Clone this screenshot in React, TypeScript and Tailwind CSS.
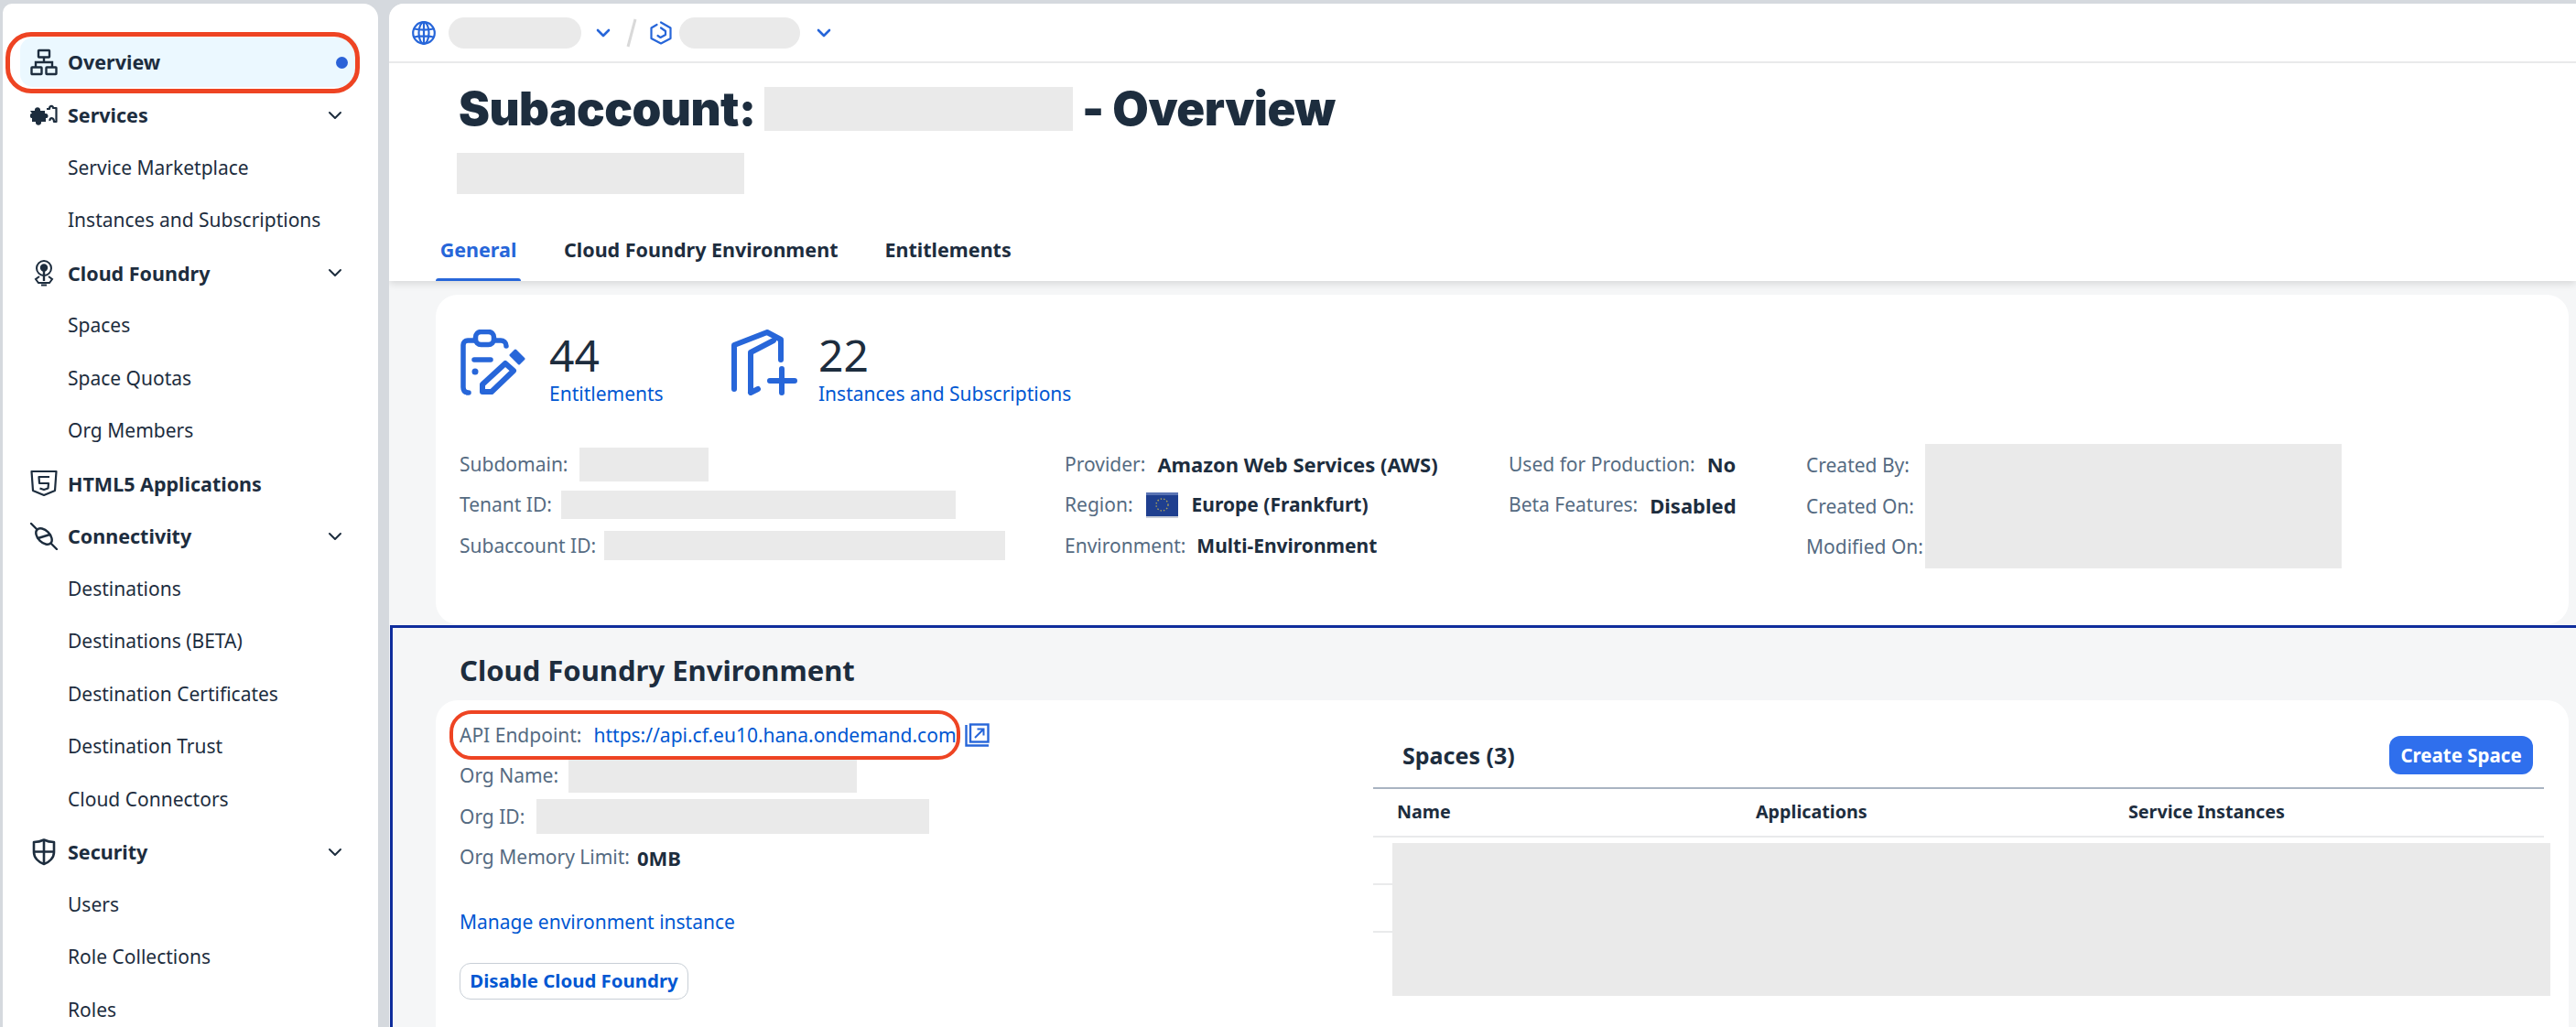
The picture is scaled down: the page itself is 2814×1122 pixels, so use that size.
import React from "react";

const F = "font-['Noto_Sans',sans-serif]";

function Chevron({ c = "text-[#1d2d3e]", w = 2 }: { c?: string; w?: number }) {
  return (
    <svg className={`w-[16px] h-[10px] ${c}`} viewBox="0 0 16 10" fill="none" stroke="currentColor" strokeWidth={w} strokeLinecap="round" strokeLinejoin="round">
      <path d="M2 2 L8 8 L14 2" />
    </svg>
  );
}

const OverviewIcon = () => (
  <svg className="w-[30px] h-[30px]" viewBox="0 0 30 30" fill="none" stroke="#1d2d3e" strokeWidth="2.4">
    <rect x="9" y="2" width="12" height="7.5" rx="0.6" />
    <path d="M15 9.5 V15 M6 20 V15 H24 V20" />
    <rect x="1.5" y="20.5" width="11" height="7.5" rx="0.6" />
    <rect x="17.5" y="20.5" width="11" height="7.5" rx="0.6" />
  </svg>
);
const ServicesIcon = () => (
  <svg className="w-[30px] h-[30px]" viewBox="0 0 30 30" fill="none">
    <path d="M0 10 H5 C4 5 12 5 11 10 H16 V13 C20 12 21 18 17 18 V22 H12 C13 27 5 27 6 22 H2 V18 C-1 18 -1 13 2 13 Z" fill="#1d2d3e" />
    <path d="M18 8 H21 C21 4 25 4 25 7 H28.5 V22 H26 C26 17 21 17 21.5 21" stroke="#1d2d3e" strokeWidth="2.2" strokeLinejoin="round" />
  </svg>
);
const CFIcon = () => (
  <svg className="w-[30px] h-[30px]" viewBox="0 0 30 30" fill="none" stroke="#1d2d3e" strokeWidth="2">
    <circle cx="15" cy="10" r="8" />
    <circle cx="15" cy="9.5" r="3.2" fill="#1d2d3e" />
    <path d="M15 12 V24" strokeWidth="2.4" />
    <path d="M10 19 L6 22 L9 26 H21 L24 22 L20 19 M12 28.5 H18" />
  </svg>
);
const Html5Icon = () => (
  <svg className="w-[30px] h-[30px]" viewBox="0 0 30 30" fill="none" stroke="#1d2d3e" strokeWidth="2.2" strokeLinejoin="round">
    <path d="M1.5 2 H28.5 L27 23 L15 28 L3 23 Z" />
    <path d="M21 8 H9.5 L10 15 H20 L19.5 20.5 L15 22 L10.5 20.5" />
  </svg>
);
const ConnIcon = () => (
  <svg className="w-[30px] h-[30px]" viewBox="0 0 30 30" fill="none" stroke="#1d2d3e" strokeWidth="2.4" strokeLinecap="round">
    <path d="M1 1 L7.5 7.5 M22.5 22.5 L29 29" />
    <ellipse cx="15" cy="15" rx="10.5" ry="6.5" transform="rotate(45 15 15)" />
    <path d="M8.5 17 L21.5 13" />
  </svg>
);
const SecIcon = () => (
  <svg className="w-[30px] h-[30px]" viewBox="0 0 30 30" fill="none" stroke="#1d2d3e" strokeWidth="2.6" strokeLinejoin="round">
    <path d="M15 1.5 C19 3.5 22 4 26 4 V15 C26 21 21 26 15 28 C9 26 4 21 4 15 V4 C8 4 11 3.5 15 1.5 Z" />
    <path d="M15 1.5 V28 M4 14.5 H26" />
  </svg>
);

function NavHead({ icon, label, chevron = true }: { icon: React.ReactNode; label: string; chevron?: boolean }) {
  return (
    <div className="h-[57.5px] flex items-center pl-[30px] pr-[39px]">
      <span className="w-[30px] flex justify-center">{icon}</span>
      <span className="ml-[11px] flex-1 font-bold text-[21.5px] text-[#1d2d3e]">{label}</span>
      {chevron && <Chevron />}
    </div>
  );
}
function NavItem({ label }: { label: string }) {
  return <div className="h-[57.5px] flex items-center pl-[71px] text-[#1d2d3e]">{label}</div>;
}

function Redact({ className }: { className: string }) {
  return <div className={`bg-[#eaeaea] shrink-0 ${className}`} />;
}

function Field({ label, value, valueClass = "ml-[13px] text-[22px]", children }: { label: string; value?: string; valueClass?: string; children?: React.ReactNode }) {
  return (
    <div className="h-[44.5px] flex items-center whitespace-nowrap">
      <span className="text-[#556b82]">{label}</span>
      {children}
      {value && <span className={`font-bold text-[#1d2d3e] ${valueClass}`}>{value}</span>}
    </div>
  );
}

const Flag = () => (
  <svg className="w-[35px] h-[28px] ml-[14px] shrink-0" viewBox="0 0 35 28">
    <rect width="35" height="26" fill="#1f3f8f" />
    <rect width="35" height="3" fill="#5a74b4" />
    <rect y="26" width="35" height="2" fill="#c9ced8" />
    <circle cx="17.5" cy="13.5" r="6.5" fill="none" stroke="#a9a05a" strokeWidth="1.4" strokeDasharray="1.5 2" />
  </svg>
);

export default function App() {
  return (
    <div className={`${F} w-[2814px] h-[1122px] overflow-hidden bg-[#d5d9de] flex pt-[4px] pl-[3px] text-[21px] leading-none`}>
      <aside className="w-[410px] h-full bg-white rounded-tr-[16px] rounded-tl-[10px] pt-[37px] shrink-0 relative">
        <div className="h-[54px] mb-[2px] ml-[19px] mr-[21px] bg-[#ebf8ff] rounded-[14px] flex items-center pl-[11px] pr-[12px]">
          <OverviewIcon />
          <span className="ml-[11px] flex-1 font-bold text-[21.5px] text-[#1d2d3e]">Overview</span>
          <span className="w-[13px] h-[13px] rounded-full bg-[#2a62d8]" />
        </div>
        <div className="absolute left-[3px] top-[31px] w-[387px] h-[67px] rounded-[28px] border-[5px] border-[#ee4423]" />
        <NavHead icon={<ServicesIcon />} label="Services" />
        <NavItem label="Service Marketplace" />
        <NavItem label="Instances and Subscriptions" />
        <NavHead icon={<CFIcon />} label="Cloud Foundry" />
        <NavItem label="Spaces" />
        <NavItem label="Space Quotas" />
        <NavItem label="Org Members" />
        <NavHead icon={<Html5Icon />} label="HTML5 Applications" chevron={false} />
        <NavHead icon={<ConnIcon />} label="Connectivity" />
        <NavItem label="Destinations" />
        <NavItem label="Destinations (BETA)" />
        <NavItem label="Destination Certificates" />
        <NavItem label="Destination Trust" />
        <NavItem label="Cloud Connectors" />
        <NavHead icon={<SecIcon />} label="Security" />
        <NavItem label="Users" />
        <NavItem label="Role Collections" />
        <NavItem label="Roles" />
      </aside>

      <main className="ml-[12px] flex-1 min-w-0 h-full flex flex-col rounded-tl-[16px] overflow-hidden bg-[#f5f6f7]">
        <div className="bg-white shadow-[0_3px_8px_rgba(0,0,0,0.12)] relative z-10 shrink-0">
          <div className="h-[65px] border-b-2 border-[#e9eaeb] flex items-center pl-[25px]">
            <svg className="w-[26px] h-[26px] text-[#2766d9]" viewBox="0 0 26 26" fill="none" stroke="currentColor" strokeWidth="2.2">
              <circle cx="13" cy="13" r="11.8" />
              <ellipse cx="13" cy="13" rx="5.5" ry="11.8" />
              <path d="M13 1 V25 M2.5 8.5 C8 10 18 10 23.5 8.5 M2.5 17.5 C8 16 18 16 23.5 17.5" />
            </svg>
            <Redact className="ml-[14px] w-[145px] h-[34px] rounded-full" />
            <span className="ml-[16px]"><Chevron c="text-[#2766d9]" w={2.6} /></span>
            <svg className="ml-[17px] w-[12px] h-[32px]" viewBox="0 0 12 32" stroke="#d9d9d9" strokeWidth="3"><path d="M10 1 L2 31" /></svg>
            <svg className="ml-[14px] w-[24px] h-[26px] text-[#2766d9]" viewBox="0 0 24 26" fill="none" stroke="currentColor" strokeWidth="2.2" strokeLinejoin="round" strokeLinecap="round">
              <path d="M12 1.5 L22.5 7.5 V19 L12 24.5 L1.5 19 V7.5 L7.5 4" />
              <path d="M12 7.5 L17 11 V15 L11.5 18 L8.5 16" />
            </svg>
            <Redact className="ml-[8px] w-[132px] h-[34px] rounded-full" />
            <span className="ml-[18px]"><Chevron c="text-[#2766d9]" w={2.6} /></span>
          </div>
          <div className="pl-[74px] pt-[25px] h-[173px]">
            <div className="flex items-center h-[49px] text-[51px] font-black font-['Inter',sans-serif] tracking-[-0.5px] text-[#1d2d3e] whitespace-nowrap">
              <span className="w-[326px] shrink-0 pl-[2px]">Subaccount:</span>
              <Redact className="ml-[10px] w-[337px] h-[48px]" />
              <span className="ml-[10px]">- Overview</span>
            </div>
            <Redact className="mt-[24px] w-[314px] h-[45px]" />
          </div>
          <div className="h-[65px] flex pl-[51px] font-bold text-[21.5px]">
            <div className="w-[93px] h-full relative flex items-center justify-center text-[#2766d9] pb-[3px]">
              General
              <span className="absolute left-0 right-0 bottom-0 h-[3px] rounded-t bg-[#2766d9]" />
            </div>
            <div className="ml-[47px] flex items-center pb-[3px] text-[#1d2d3e]">Cloud Foundry Environment</div>
            <div className="ml-[51px] flex items-center pb-[3px] text-[#1d2d3e]">Entitlements</div>
          </div>
        </div>

        <div className="flex-1 min-h-0 flex flex-col">
          <div className="pt-[15px] pl-[51px] pr-[8px] shrink-0">
            <section className="h-[360px] bg-white rounded-[24px] pt-[38px] pl-[26px]">
              <div className="flex h-[72px]">
                <svg className="w-[72px] h-[72px] text-[#2766d9] shrink-0" viewBox="0 0 72 72" fill="none" stroke="currentColor" strokeWidth="5.5" strokeLinecap="round" strokeLinejoin="round">
                  <path d="M16 12 H9 C6 12 4 14 4 17 V63 C4 67 6 69 10 69" />
                  <path d="M40 12 H45 C48 12 51 14 51 18" />
                  <rect x="17.5" y="2.5" width="20" height="14" rx="6" />
                  <path d="M16 33 H34" />
                  <circle cx="17" cy="46" r="3.5" fill="currentColor" stroke="none" />
                  <path d="M25 60 L50 37 L59 45 L35 68 L25 68 Z" strokeWidth="6" />
                  <path d="M61 23 L70 32 L65 37 L56 28 Z" fill="currentColor" strokeWidth="3" />
                </svg>
                <div className="ml-[26px] w-[199px] shrink-0">
                  <div className="text-[48px] h-[46px] leading-[46px] mt-[5px] text-[#1d2d3e]">44</div>
                  <div className="mt-[9px] text-[#0057d2]">Entitlements</div>
                </div>
                <svg className="w-[72px] h-[72px] text-[#2766d9] shrink-0" viewBox="0 0 72 72" fill="none" stroke="currentColor" strokeWidth="6" strokeLinecap="round" strokeLinejoin="round">
                  <path d="M3 65 V17 L39 3 L54 11 V33" />
                  <path d="M21 68 V25 L46 12" />
                  <path d="M21 69 L29 65" />
                  <path d="M55 43 V69 M42 56 H69" />
                </svg>
                <div className="ml-[23px]">
                  <div className="text-[48px] h-[46px] leading-[46px] mt-[5px] text-[#1d2d3e]">22</div>
                  <div className="mt-[9px] text-[#0057d2]">Instances and Subscriptions</div>
                </div>
              </div>
              <div className="mt-[53px] grid grid-cols-[661px_485px_325px_1fr]">
                <div>
                  <Field label="Subdomain:"><Redact className="ml-[13px] w-[141px] h-[37px]" /></Field>
                  <Field label="Tenant ID:"><Redact className="ml-[10px] w-[431px] h-[31px]" /></Field>
                  <Field label="Subaccount ID:"><Redact className="ml-[9px] w-[438px] h-[32px]" /></Field>
                </div>
                <div>
                  <Field label="Provider:" value="Amazon Web Services (AWS)" />
                  <Field label="Region:">
                    <Flag />
                    <span className="ml-[15px] font-bold text-[21px] text-[#1d2d3e]">Europe (Frankfurt)</span>
                  </Field>
                  <Field label="Environment:" value="Multi-Environment" valueClass="ml-[12px] text-[21px]" />
                </div>
                <div>
                  <Field label="Used for Production:" value="No" />
                  <Field label="Beta Features:" value="Disabled" />
                </div>
                <div className="flex items-center">
                  <div className="w-[130px]">
                    <Field label="Created By:" />
                    <Field label="Created On:" />
                    <Field label="Modified On:" />
                  </div>
                  <Redact className="w-[455px] h-[136px]" />
                </div>
              </div>
            </section>
          </div>

          <section className="mt-[1px] ml-[1px] flex-1 min-h-0 border-t-[3px] border-l-[3px] border-[#0f2d9c] bg-[#f5f6f7] pl-[47px] pr-[8px] flex flex-col">
            <h2 className="h-[79px] flex items-center pl-[26px] pt-[13px] text-[31px] font-bold text-[#1d2d3e]">Cloud Foundry Environment</h2>
            <div className="flex-1 bg-white rounded-t-[24px] flex pt-[16px]">
              <div className="w-[1024px] shrink-0 pl-[26px] relative">
                <div className="absolute left-[15px] -top-[5px] mt-[16px] -translate-y-[16px] w-[558px] h-[54px] rounded-[24px] border-[4px] border-[#ee4423]" />
                <Field label="API Endpoint:">
                  <a className="ml-[13px] text-[#0057d2]">https://api.cf.eu10.hana.ondemand.com</a>
                  <svg className="ml-[9px] w-[27px] h-[26px] text-[#2766d9]" viewBox="0 0 27 26" fill="none" stroke="currentColor" strokeWidth="2.4">
                    <rect x="6" y="1.5" width="19.5" height="19" />
                    <path d="M1.5 2 V24.5 H26" />
                    <path d="M11 16 L20 7 M13.5 6.5 H20.5 V13.5" strokeWidth="2" />
                  </svg>
                </Field>
                <Field label="Org Name:"><Redact className="ml-[11px] w-[315px] h-[37px]" /></Field>
                <Field label="Org ID:"><Redact className="ml-[13px] w-[429px] h-[38px]" /></Field>
                <Field label="Org Memory Limit:" value="0MB" valueClass="ml-[8px] text-[22px]" />
                <div className="mt-[26px] h-[44.5px] flex items-center text-[#0057d2]">Manage environment instance</div>
                <button className="mt-[22px] w-[250px] h-[40px] rounded-[12px] border-[1.5px] border-[#c8cfd6] bg-white text-[#0057d2] font-bold text-[20.4px]">Disable Cloud Foundry</button>
              </div>
              <div className="w-[1279px] shrink-0 pt-[23px]">
                <div className="h-[58px] border-b-2 border-[#a9b4c2] flex items-start justify-between pl-[32px] pr-[12px]">
                  <span className="mt-[5px] h-[32px] flex items-center font-bold text-[25px] text-[#1d2d3e]">Spaces (3)</span>
                  <button className="w-[157px] h-[42px] rounded-[12px] bg-[#2f6fed] text-white font-bold text-[20.5px]">Create Space</button>
                </div>
                <div className="h-[53px] pb-[2px] border-b-2 border-[#e9eaeb] grid grid-cols-[392px_407px_1fr] items-center pl-[26px] font-bold text-[19.7px] text-[#1d2d3e]">
                  <span>Name</span>
                  <span>Applications</span>
                  <span>Service Instances</span>
                </div>
                <div className="relative">
                  <div className="h-[52px] border-b-2 border-[#e9eaeb]" />
                  <div className="h-[52px] border-b-2 border-[#e9eaeb]" />
                  <Redact className="absolute left-[21px] top-[6px] w-[1265px] h-[167px]" />
                </div>
              </div>
            </div>
          </section>
        </div>
      </main>
    </div>
  );
}
